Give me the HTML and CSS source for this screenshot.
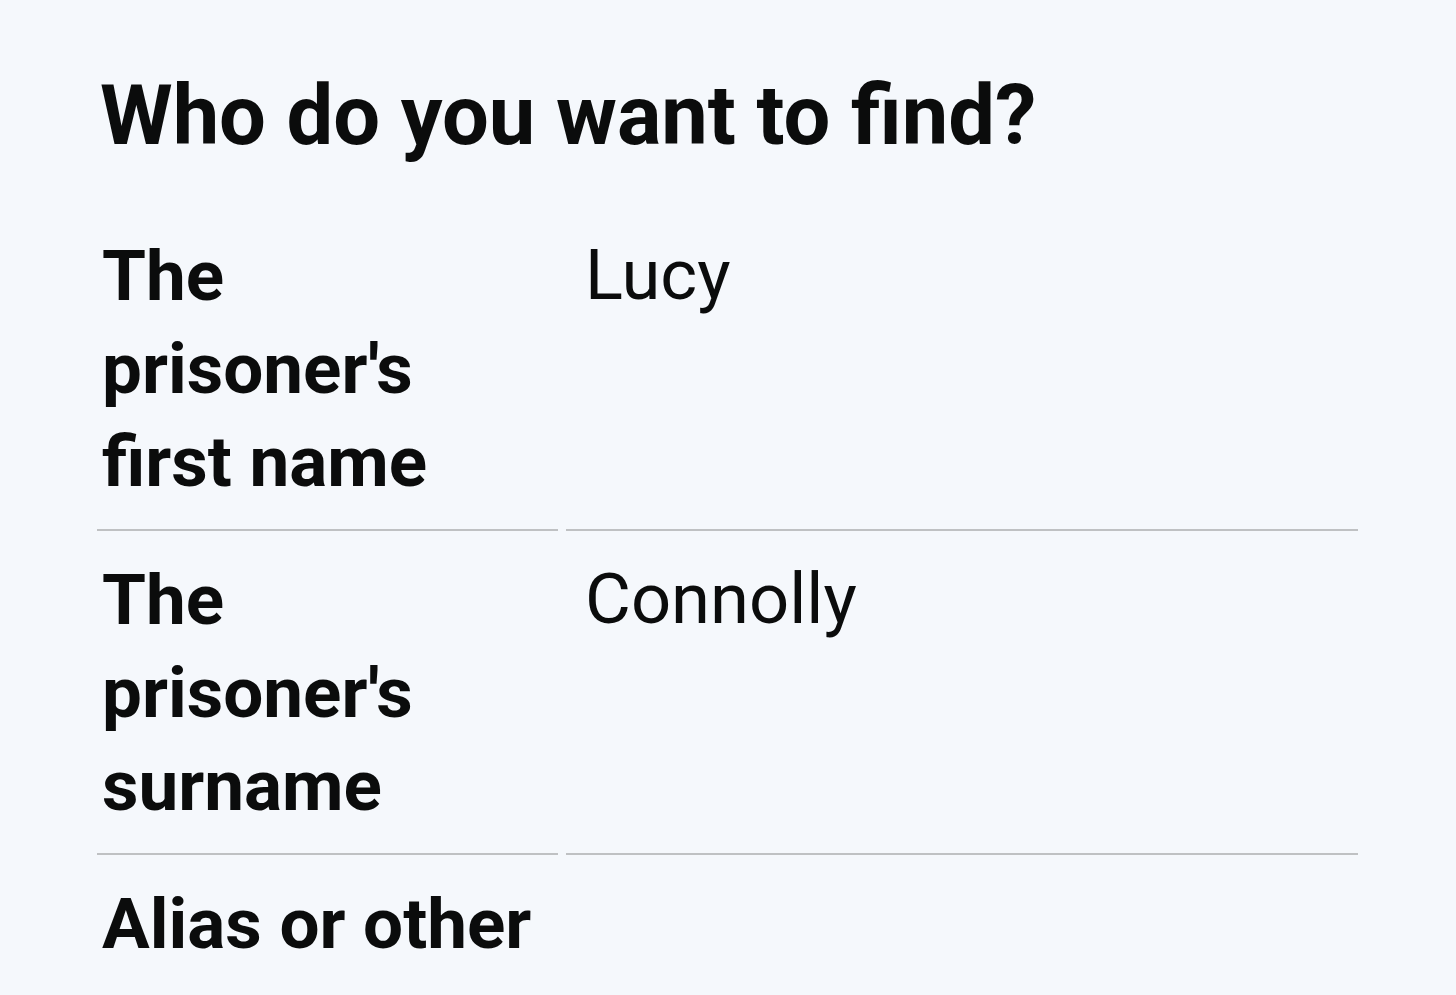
FILE: index.html
```html
<!DOCTYPE html>
<html lang="en">
<head>
<meta charset="utf-8">
<title>Who do you want to find?</title>
<link rel="stylesheet" href="styles.css">
</head>
<body>
<main class="page">
  <h1 class="heading">Who do you want to find?</h1>
  <dl class="summary">
    <div class="row">
      <dt class="key">The prisoner's first name</dt>
      <dd class="value">Lucy</dd>
    </div>
    <div class="row">
      <dt class="key">The prisoner's surname</dt>
      <dd class="value">Connolly</dd>
    </div>
    <div class="row">
      <dt class="key">Alias or other names</dt>
      <dd class="value"></dd>
    </div>
  </dl>
</main>
</body>
</html>
```
FILE: styles.css
```css
html, body {
  margin: 0;
  padding: 0;
  background: #f5f8fc;
}
body {
  font-family: Roboto, "Liberation Sans", Arial, sans-serif;
  color: #0b0c0c;
  overflow: hidden;
}
.page {
  padding: 65px 98px 0 97px;
}
.heading {
  margin: 0 0 41px 0;
  padding-left: 3px;
  font-size: 83px;
  line-height: 101px;
  font-weight: 700;
}
.summary {
  margin: 0;
  padding: 0;
}
.row {
  display: grid;
  grid-template-columns: 461px 792px;
  column-gap: 8px;
}
.key, .value {
  margin: 0;
  padding: 22px 0 21px 0;
  border-bottom: 2px solid #bfc1c3;
  line-height: 93px;
}
.key {
  font-size: 71px;
  font-weight: 700;
  padding-left: 5px;
  padding-right: 20px;
}
.value {
  font-size: 70.5px;
  font-weight: 400;
  padding-left: 19px;
}
```
